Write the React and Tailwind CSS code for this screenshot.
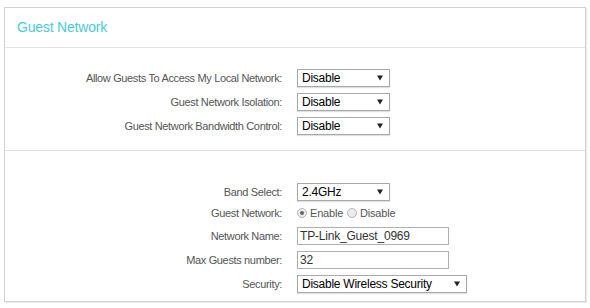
import React from "react";

const font = { fontFamily: '"Liberation Sans", Arial, sans-serif' };

function Arrow() {
  return (
    <svg width="6" height="6" viewBox="0 0 6 6" className="shrink-0">
      <path d="M0 0.5 H6 L3 5.5 Z" fill="#222" />
    </svg>
  );
}

function Select({ value, width }) {
  return (
    <div
      className={`${width} h-[18px] border border-[#a9a9a9] bg-white flex items-center justify-between pl-[4px] pr-[6px] shadow-[0_1px_1px_rgba(0,0,0,0.12)]`}
    >
      <span className="text-[12px] leading-[14px] tracking-[-0.25px] text-black">{value}</span>
      <Arrow />
    </div>
  );
}

function Input({ value }) {
  return (
    <div className="w-[152px] h-[18px] border border-[#b0b0b0] bg-white flex items-center pl-[2px]">
      <span className="text-[12px] leading-[14px] tracking-[-0.2px] text-[#333]">{value}</span>
    </div>
  );
}

function Radio({ checked, label }) {
  return (
    <label className="flex items-center gap-[3px]">
      <span className="w-[10px] h-[10px] rounded-full border border-[#b5b5b5] bg-[#ececec] flex items-center justify-center">
        {checked && <span className="w-[4px] h-[4px] rounded-full bg-[#666]" />}
      </span>
      <span className="text-[11px] leading-[13px] tracking-[-0.2px] text-[#555]">{label}</span>
    </label>
  );
}

function Row({ label, h = "h-[24px]", mt = "", children }) {
  return (
    <div className={`flex items-center ${h} ${mt}`}>
      <div className="w-[277px] text-right text-[11px] leading-[13px] tracking-[-0.35px] text-[#555]">
        {label}
      </div>
      <div className="ml-[15px] flex items-center">{children}</div>
    </div>
  );
}

export default function App() {
  return (
    <div className="w-[590px] h-[308px] bg-white pt-[7px] pl-[4px]" style={font}>
      <div className="w-[582px] h-[295px] border border-[#d2d2d2] shadow-[1px_1px_1px_rgba(0,0,0,0.08)] bg-white flex flex-col">
        <div className="h-[40px] shrink-0 border-b border-[#e2e2e2] pl-[12px] pt-[7px]">
          <span className="text-[14px] leading-[16px] tracking-[-0.2px] text-[#4acbd6]">Guest Network</span>
        </div>
        <div className="h-[103px] shrink-0 border-b border-[#e2e2e2] pt-[18px]">
          <Row label="Allow Guests To Access My Local Network:">
            <Select value="Disable" width="w-[93px]" />
          </Row>
          <Row label="Guest Network Isolation:">
            <Select value="Disable" width="w-[93px]" />
          </Row>
          <Row label="Guest Network Bandwidth Control:">
            <Select value="Disable" width="w-[93px]" />
          </Row>
        </div>
        <div className="flex-1 pt-[29px]">
          <Row label="Band Select:">
            <Select value="2.4GHz" width="w-[93px]" />
          </Row>
          <Row label="Guest Network:" h="h-[18px]">
            <div className="flex items-center gap-[4px]">
              <Radio checked label="Enable" />
              <Radio label="Disable" />
            </div>
          </Row>
          <Row label="Network Name:" mt="mt-[2px]">
            <Input value="TP-Link_Guest_0969" />
          </Row>
          <Row label="Max Guests number:">
            <Input value="32" />
          </Row>
          <Row label="Security:">
            <Select value="Disable Wireless Security" width="w-[170px]" />
          </Row>
        </div>
      </div>
    </div>
  );
}
